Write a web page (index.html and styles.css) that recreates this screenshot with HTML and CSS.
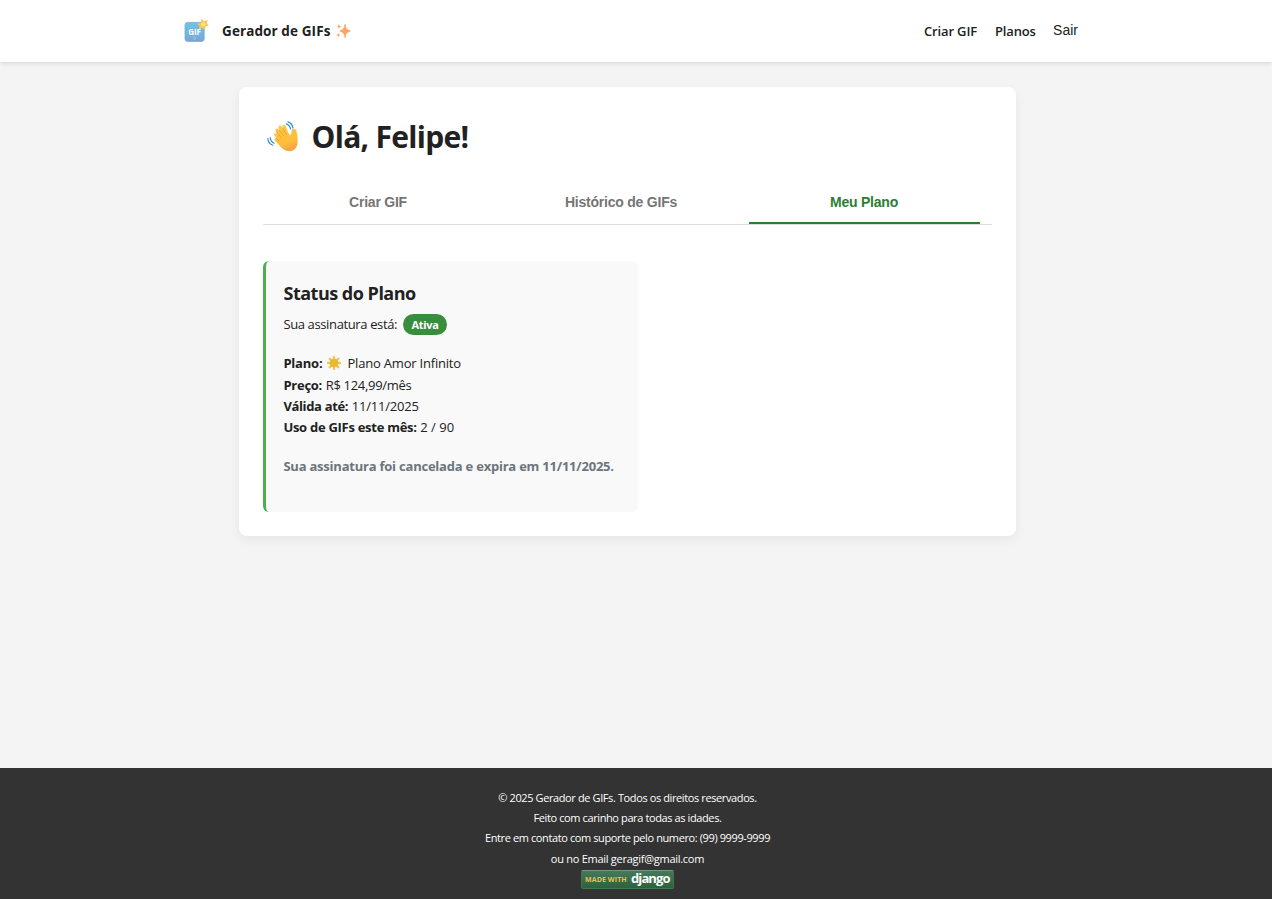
FILE: index.html
```html
<!DOCTYPE html>
<html lang="pt-BR">
<head>
<meta charset="utf-8">
<title>Gerador de GIFs</title>
<link rel="stylesheet" href="styles.css">
</head>
<body>
<header class="header">
  <div class="header-inner">
    <div class="brand">
      <svg class="logo" viewBox="0 0 26 26" width="26" height="26">
        <defs><linearGradient id="lg" x1="0" y1="0" x2="0" y2="1"><stop offset="0" stop-color="#6fc3e2"/><stop offset=".7" stop-color="#72b4dc"/><stop offset="1" stop-color="#8a9bd2"/></linearGradient></defs>
        <rect x="2" y="4.4" width="19.2" height="19" rx="2.6" fill="url(#lg)" stroke="#7ba9d3" stroke-width=".8"/>
        <rect x="10.3" y="19.2" width="2.4" height="2.2" fill="none" stroke="#93c6e6" stroke-width=".6"/>
        <path d="M18.700.3 20.700 3.200l3.800-1.200-.6 3.500 1.900 2.100-3.200.9-.5 3.400-3-1.800-3.200 1.300.7-3.400-2.700-2.300 3.800-.7z" fill="#f8cb56"/>
        <circle cx="20.300" cy="6.300" r="1.900" fill="#ffe28b"/>
        <text class="logo-text" x="11.600" y="17.200">GIF</text>
      </svg>
      <span class="brand-name">Gerador de GIFs</span>
      <svg class="sparkles" viewBox="0 0 16 16" width="16" height="16">
        <path d="M10 1.300C10.600 5.300 11.500 6.700 15.300 8 11.500 9.300 10.600 10.700 10 14.700 9.400 10.700 8.500 9.300 4.700 8 8.500 6.700 9.400 5.300 10 1.300Z" fill="#fba55f" stroke="#fba55f" stroke-width=".8" stroke-linejoin="round"/>
        <path d="M4 .8C4.300 2.700 4.800 3.200 6.500 3.600 4.800 4 4.300 4.600 4 6.300 3.700 4.600 3.200 4 1.500 3.600 3.200 3.200 3.700 2.700 4 .8ZM3.400 9.700C3.700 11.300 4.200 11.700 5.800 12.100 4.200 12.500 3.700 13 3.400 14.500 3.100 13 2.600 12.500 1 12.100 2.600 11.700 3.100 11.300 3.400 9.700Z" fill="#f8a45f"/>
      </svg>
    </div>
    <nav class="nav">
      <a class="nav-link nav-criar">Criar GIF</a>
      <a class="nav-link nav-planos">Planos</a>
      <button class="logout">Sair</button>
    </nav>
  </div>
</header>
<main class="main">
  <section class="card">
    <h1 class="title">
      <svg class="wave" viewBox="0 0 34 34" width="34" height="34">
        <defs><linearGradient id="hg" x1="0" y1="0" x2=".3" y2="1"><stop offset="0" stop-color="#ffc83f"/><stop offset=".8" stop-color="#fdbd3c"/><stop offset="1" stop-color="#f8a548"/></linearGradient></defs>
        <path d="M9.800 10.800C8.700 8.900 11 7.500 12.300 9.300L13.400 10.700 12.500 7.900C11.700 5.700 14.500 4.600 15.600 6.700L16.700 8.400 16.500 6.200C16.500 4.300 19.100 4 19.700 6L22 12.200 24 15.500C25.300 14.600 25.500 13.200 25.500 10.900 25.600 8.300 29.100 8 30.200 10.500 31.300 13.200 31.700 17.200 31.700 21.500 31.600 27.300 28.400 31.200 23.800 31.200 18.800 31.200 16.500 28.800 13.100 25.300L9.300 21.100C7.700 19.200 9.100 17.600 10.900 18.700L8.600 15.700C7.200 13.700 9.300 12.400 10.800 14.100Z" fill="url(#hg)"/>
        <path d="M10.600 11.500 15 17.500M13.600 10.600 17.600 16M17 8.500 20.500 14.500M10.700 18.500 13 21" fill="none" stroke="#eda137" stroke-width=".9" stroke-linecap="round"/>
        <path d="M20.300 3.900C22.700 4.800 24.100 6.300 24.600 9M21.900 1.900C24.800 2.800 26.500 4.900 26.900 7.800M4.300 17.700C4.400 20.300 5.600 22.100 8.200 23.200M1.900 18.600C2 21.800 3.600 24.200 6.600 25.200" fill="none" stroke="#2e8bd3" stroke-width="1.200" stroke-linecap="round"/>
      </svg>
      <span class="title-text">Olá, Felipe!</span>
    </h1>
    <div class="tabs">
      <button class="tab">Criar GIF</button>
      <button class="tab">Histórico de GIFs</button>
      <button class="tab active">Meu Plano</button>
    </div>
    <article class="plan">
      <h2 class="plan-title">Status do Plano</h2>
      <div class="row status"><span class="t-status">Sua assinatura está:</span><span class="badge">Ativa</span></div>
      <div class="row gap-top plan-name"><b class="l-plano">Plano:</b>
        <svg class="star" viewBox="0 0 14 14" width="14" height="14"><path d="M7 1V13M1 7H13M2.800 2.800 11.200 11.200M11.200 2.800 2.800 11.200" stroke="#edc559" stroke-width="2.400" stroke-linecap="round"/><circle cx="7" cy="7" r="4.300" fill="#e9b833"/></svg>
        <span class="t-amor">Plano Amor Infinito</span></div>
      <div class="row"><b class="l-preco">Preço:</b><span class="t-preco">R$ 124,99/mês</span></div>
      <div class="row"><b class="l-valida">Válida até:</b><span class="t-valida">11/11/2025</span></div>
      <div class="row"><b class="l-uso">Uso de GIFs este mês:</b><span class="t-uso">2 / 90</span></div>
      <div class="row gap-top cancelled"><b class="l-cancel">Sua assinatura foi cancelada e expira em 11/11/2025.</b></div>
    </article>
  </section>
</main>
<footer class="footer">
  <p class="f1">© 2025 Gerador de GIFs. Todos os direitos reservados.</p>
  <p class="f2">Feito com carinho para todas as idades.</p>
  <p class="f3">Entre em contato com suporte pelo numero: (99) 9999-9999</p>
  <p class="f4">ou no Email geragif@gmail.com</p>
  <div class="django"><span class="made">MADE WITH</span><span class="dj">django</span></div>
</footer>
</body>
</html>
```
FILE: styles.css
```css
* { box-sizing: border-box; }
body {
  margin: 0;
  height: 899px;
  display: flex;
  flex-direction: column;
  background: #f4f4f4;
  color: #212121;
  font-family: "Open Sans", "Noto Sans", sans-serif;
  font-size: 13px;
  overflow: hidden;
}
h1, h2, p { margin: 0; }
span, b, a, p { white-space: nowrap; }
.header {
  height: 62px;
  flex: none;
  padding-right: 17px;
  background: #fff;
  box-shadow: 0 2px 4px rgba(0, 0, 0, .1);
}
.header-inner {
  width: 901px;
  height: 62px;
  margin: 0 auto;
  padding-left: 6px;
  display: flex;
  justify-content: space-between;
  align-items: center;
}
.brand { display: flex; align-items: center; }
.logo { margin-bottom: 1px; }
.logo-text { font: 700 8px "Open Sans", sans-serif; fill: #fff; text-anchor: middle; }
.brand-name { margin-left: 13px; font-weight: 700; font-size: 13.500px; letter-spacing: .1px; width: 109px; }
.sparkles { margin-left: 4px; }
.nav { display: flex; align-items: center; font-size: 13px; }
.nav-link { font-weight: 600; width: 54px; letter-spacing: -.15px; }
.nav-planos { width: 41px; margin-left: 17px; letter-spacing: -.15px; }
.logout {
  width: 25px;
  margin: 0 0 3px 17px;
  padding: 0;
  border: 0;
  background: none;
  color: #212121;
  font: 14px "Liberation Sans", Arial, sans-serif;
}
.main { flex: 1; padding: 25px 17px 0 0; }
.card {
  width: 777px;
  height: 449px;
  margin: 0 auto;
  padding: 24px;
  border-radius: 8px;
  background: #fff;
  box-shadow: 0 4px 12px rgba(0, 0, 0, .06);
}
.title { display: flex; align-items: center; height: 52px; padding-left: 3px; font-size: 30px; line-height: 50px; }
.title-text { margin-left: 11.500px; letter-spacing: -.7px; }
.tabs {
  display: grid;
  grid-template-columns: repeat(3, 231px);
  column-gap: 12px;
  height: 46px;
  margin-top: 16px;
  border-bottom: 1px solid #ddd;
}
.tab {
  padding: 2px 1px 0 0;
  border: 0;
  border-bottom: 2px solid transparent;
  background: none;
  color: #757575;
  font: bold 14px "Liberation Sans", Arial, sans-serif;
  letter-spacing: -.22px;
}
.tab.active { color: #2e7d32; border-bottom-color: #2e7d32; }
.plan {
  width: 375px;
  height: 251px;
  margin-top: 36px;
  padding: 18px 17px;
  border-left: 3px solid #4caf50;
  border-radius: 6px;
  background: #f9f9f9;
}
.plan-title { padding-left: .5px; font-size: 18px; line-height: 28px; height: 33px; white-space: nowrap; letter-spacing: -.5px; }
.row { display: flex; align-items: center; height: 21px; padding-left: .4px; line-height: 21px; }
.row span { margin-left: 3.600px; }
.row .t-status { width: 114px; margin-left: 0; letter-spacing: -.37px; }
.row .badge {
  width: 44px;
  height: 21px;
  margin-left: 5.600px;
  border-radius: 11px;
  background: #388e3c;
  color: #fff;
  font-size: 11px;
  font-weight: 700;
  line-height: 21px;
  text-align: center;
  letter-spacing: -.35px;
}
.status { height: 24px; }
.gap-top { margin-top: 17px; }
.plan-name { height: 22px; padding-bottom: 2px; line-height: 20px; }
.l-plano { letter-spacing: -.2px; }
.star { margin-left: 5px; }
.row .t-amor { margin-left: 6px; letter-spacing: -.2px; }
.l-preco { letter-spacing: -.25px; }
.t-preco { letter-spacing: -.3px; }
.l-valida { letter-spacing: -.35px; }
.t-valida { letter-spacing: -.2px; }
.l-uso { letter-spacing: -.28px; }
.l-cancel { letter-spacing: -.22px; }
.cancelled { margin-top: 18px; color: #6c757d; }
.footer {
  height: 131px;
  flex: none;
  padding: 20px 17px 0 0;
  display: flex;
  flex-direction: column;
  align-items: center;
  background: #333;
  color: #fff;
  font-size: 11px;
}
.footer p { height: 20px; line-height: 20px; letter-spacing: -.39px; }
.footer .f4 { height: 21px; line-height: 22px; letter-spacing: -.27px; }
.django {
  display: flex;
  align-items: center;
  width: 93px;
  height: 19px;
  margin-top: 1px;
  padding-left: 3px;
  border: 1px solid #427451;
  border-top-color: #6e9b78;
  border-radius: 2px;
  background: linear-gradient(#46795a, #2c623d);
  line-height: 17px;
}
.made { width: 43px; color: #eebd4d; font-size: 7px; font-weight: 700; letter-spacing: .1px; }
.dj { margin: -2px 0 0 3px; font-size: 13px; font-weight: 700; letter-spacing: -.9px; }
```
